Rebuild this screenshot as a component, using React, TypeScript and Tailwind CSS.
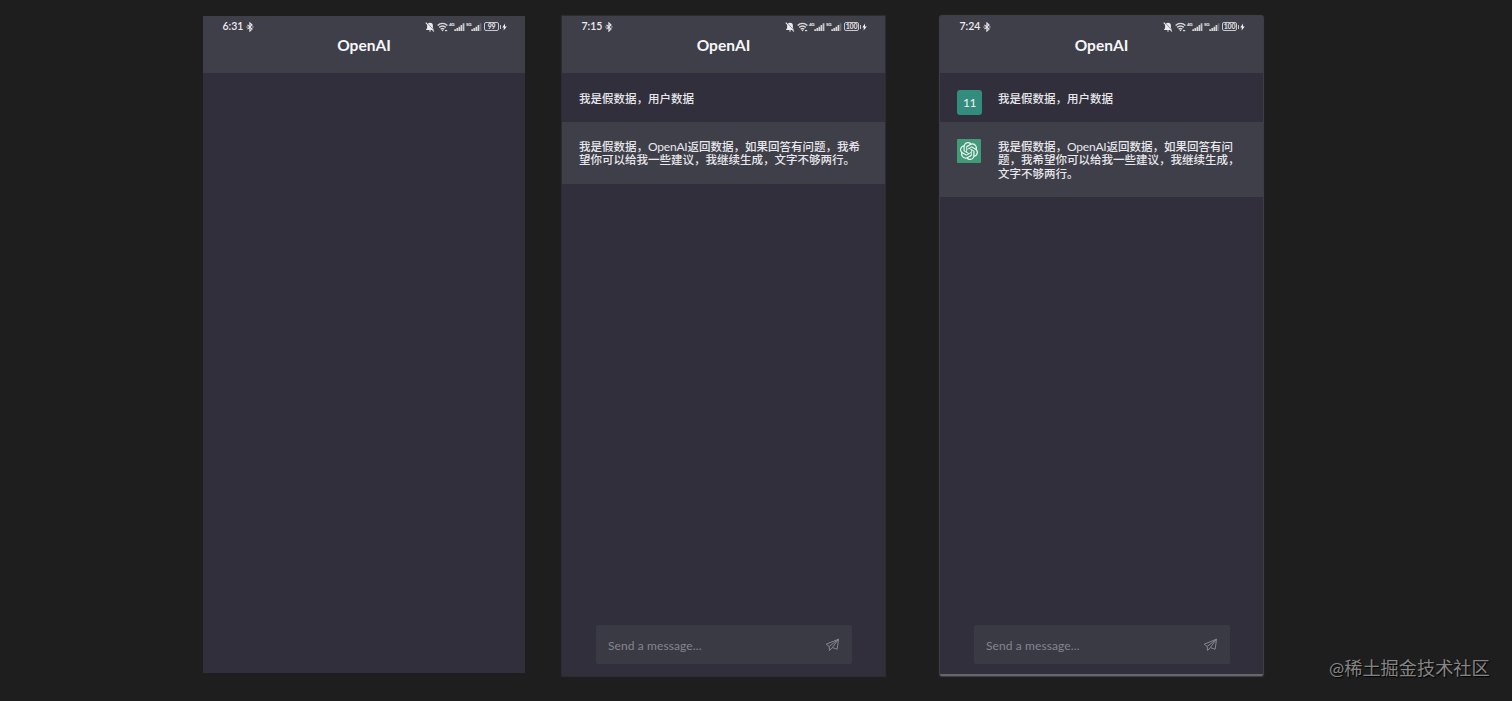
import React from "react";
import { SiOpenai } from "react-icons/si";

const sans = "font-['Lato','Noto_Sans_CJK_SC',sans-serif]";

function Bluetooth() {
  return (
    <svg width="8" height="10" viewBox="0 0 8 10" fill="none" stroke="#e4e4e8" strokeWidth="1.1">
      <path d="M1.500 2.800 6.100 7 3.900 9.100V.9l2.200 2.100-4.600 4.200" />
      <path d="M.4 5h1.200M6.300 5h1.200" />
    </svg>
  );
}

function BellOff() {
  return (
    <svg width="10" height="10" viewBox="0 0 10 10">
      <path d="M5 .8c-1.900 0-2.900 1.300-2.900 3v2.200L1.100 7.400v.5h7.800v-.5L7.900 6V3.800C7.900 2.100 6.900.8 5 .8zM4 8.400h2c0 .7-.4 1.100-1 1.100S4 9.100 4 8.400z" fill="#ececf0" />
      <path d="M1.700.3 9.700 9.100" stroke="#3f3f49" strokeWidth="0.600" />
      <path d="M.8.600 8.900 9.500" stroke="#ececf0" strokeWidth="1.100" />
    </svg>
  );
}

function Wifi() {
  return (
    <svg width="11" height="10" viewBox="0 0 11 10" fill="none" stroke="#d8d8dc" strokeWidth="1.400">
      <path d="M.6 3.500c2.900-2.600 6.900-2.600 9.800 0M2.200 5.400c2-1.700 4.600-1.700 6.600 0M3.700 7.200c1.100-.9 2.500-.9 3.600 0" />
      <circle cx="5.500" cy="8.500" r=".8" fill="#d8d8dc" stroke="none" />
      <path d="M8 8.600h2.200" strokeWidth="1.200" />
    </svg>
  );
}

function Signal({ label, weak }: { label: string; weak?: boolean }) {
  return (
    <div className="flex h-[10px] items-start">
      <span className="w-[5px] text-[4.5px] leading-[5px] font-black tracking-[-0.3px] text-[#f0f0f4]">{label}</span>
      <svg width="11" height="10" viewBox="0 0 11 10" fill="#d4d4d9">
        <path d="M.3 7.300h1.700V9H.3zM2.400 6h1.700v3H2.400zM4.500 4.700h1.700V9H4.500zM6.600 3h1.700v6H6.600z" />
        <path d="M8.700 1.300h1.700V9H8.700z" opacity={weak ? 0.3 : 0.9} />
      </svg>
    </div>
  );
}

function Battery({ level }: { level: string }) {
  return (
    <div className="flex items-center">
      <div className="flex h-[9px] w-[15px] items-center justify-center rounded-[2px] border border-[#c8c8cd] text-[7px] leading-none font-black tracking-[-0.3px] text-[#dcdce0]">
        {level}
      </div>
      <div className="ml-[0.5px] h-[4px] w-[1px] bg-[#c8c8cd]" />
      <svg className="ml-[1.500px]" width="5" height="8" viewBox="0 0 5 8" fill="#f4f4f8">
        <path d="M3.100.5.300 4.600h1.600L1.600 7.600 4.800 3.400H2.900z" />
      </svg>
    </div>
  );
}

function Header({ time, level }: { time: string; level: string }) {
  return (
    <header className="h-[57px] shrink-0 bg-[#3f3f49]">
      <div className="flex h-[21px] items-center pr-[18px] pl-[19.500px]">
        <span className="w-[23px] text-[10.500px] leading-none font-semibold whitespace-nowrap text-[#ececf0]">{time}</span>
        <Bluetooth />
        <div className="ml-auto flex items-center">
          <BellOff />
          <div className="w-[2px]" />
          <Wifi />
          <div className="w-[1px]" />
          <Signal label="4G" />
          <div className="w-[1px]" />
          <Signal label="5G" weak />
          <div className="w-[2px]" />
          <Battery level={level} />
        </div>
      </div>
      <h1 className="-mt-px text-center text-[15.500px] leading-[18px] font-bold text-[#f6f6f8]">OpenAI</h1>
    </header>
  );
}

function Composer() {
  return (
    <div className="mt-auto ml-[34px] flex h-[39px] w-[256px] shrink-0 items-center rounded-[2px] bg-[#3a3a44] px-[12px] text-[#858490]">
      <span className="pt-[2px] text-[12px] leading-none tracking-[0.1px]">Send a message...</span>
      <svg className="ml-auto" width="15" height="14" viewBox="0 0 15 14" fill="none" stroke="currentColor" strokeWidth="1" strokeLinejoin="round">
        <path d="M13.500 1.200 1.200 6.200l3 2.300 9.300-7.300-1.300 10-4.900-1.600 6.200-8.400M4.200 8.500l.3 4 2.800-2.900" />
      </svg>
    </div>
  );
}

function Lines({ rows }: { rows: string[] }) {
  return (
    <div className="text-[11.500px] leading-[13.500px] font-medium whitespace-nowrap text-[#e8e8ec]">
      {rows.map((row) => (
        <p key={row}>
          {row.split("OpenAI").map((part, i) => (
            <React.Fragment key={i}>
              {i > 0 && <span className="inline-block w-[39.500px] text-[12px] leading-none font-normal tracking-[-0.200px]">OpenAI</span>}
              {part}
            </React.Fragment>
          ))}
        </p>
      ))}
    </div>
  );
}

export default function App() {
  return (
    <main className={`${sans} flex h-[701px] w-[1512px] items-start overflow-hidden bg-[#1e1e1e] pt-[16px] pl-[203px]`}>
      <section className="flex h-[657px] w-[322px] flex-col bg-[#302f3b]">
        <Header time="6:31" level="99" />
      </section>

      <section className="ml-[37px] flex h-[660px] w-[323px] flex-col bg-[#302f3b] pb-[12px] shadow-[0_0_1px_1px_#2b2b31]">
        <Header time="7:15" level="100" />
        <div className="h-[49px] shrink-0 pt-[19px] pl-[17px]">
          <Lines rows={["我是假数据，用户数据"]} />
        </div>
        <div className="h-[62px] shrink-0 bg-[#3f3f49] pt-[17.500px] pl-[17px]">
          <Lines rows={["我是假数据，OpenAI返回数据，如果回答有问题，我希", "望你可以给我一些建议，我继续生成，文字不够两行。"]} />
        </div>
        <Composer />
      </section>

      <section className="ml-[55px] flex h-[660px] w-[323px] flex-col rounded-[2px] border-b-2 border-[#66666c] bg-[#302f3b] pb-[10px] shadow-[0_0_1px_1px_#424246]">
        <Header time="7:24" level="100" />
        <div className="flex h-[49px] shrink-0 items-start pt-[17px] pl-[17px]">
          <div className="flex size-[25px] items-center justify-center rounded-[3px] bg-[#348c7e] pt-px text-[12px] leading-none tracking-[-0.500px] text-[#eef5f3]">11</div>
          <div className="pt-[2px] pl-[16px]">
            <Lines rows={["我是假数据，用户数据"]} />
          </div>
        </div>
        <div className="flex h-[75px] shrink-0 items-start bg-[#3f3f49] pt-[17px] pl-[17px]">
          <div className="flex size-[24px] items-center justify-center rounded-[1px] bg-[#429a78] text-[#f2f8f5]">
            <SiOpenai size={18} />
          </div>
          <div className="pt-[0.500px] pl-[17px]">
            <Lines rows={["我是假数据，OpenAI返回数据，如果回答有问", "题，我希望你可以给我一些建议，我继续生成，", "文字不够两行。"]} />
          </div>
        </div>
        <Composer />
      </section>

      <p className="mt-[639px] ml-[66px] text-[18.200px] leading-[26px] font-normal whitespace-nowrap text-[#858585] [text-shadow:1px_1px_1px_#000000]">@稀土掘金技术社区</p>
    </main>
  );
}
